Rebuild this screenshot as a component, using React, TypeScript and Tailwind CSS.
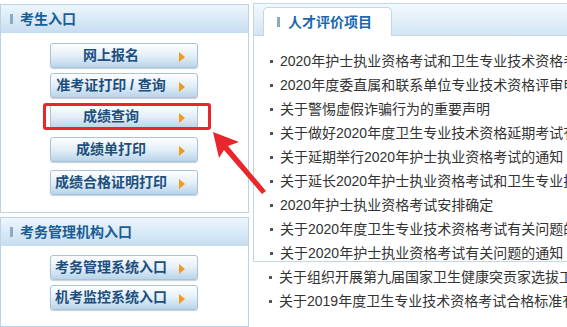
import React from "react";

const font = "font-['Liberation_Sans','Noto_Sans_CJK_SC',sans-serif]";

function Arrow() {
  return (
    <svg width="6" height="10" viewBox="0 0 6 10" className="absolute right-[12px] top-[8px]">
      <polygon points="0,0 6,5 0,10" fill="#f29a1c" />
    </svg>
  );
}

function EntryButton({ label, className = "" }: { label: string; className?: string }) {
  return (
    <div
      className={`relative ml-[49px] flex h-[25px] w-[148px] items-center justify-center rounded-[3px] border border-[#a9c3d8] bg-gradient-to-b from-[#fdfeff] via-[#e4eff8] to-[#b9d4e9] pr-[26px] text-[14px] font-bold text-[#1d4f7e] shadow-[0_1px_1px_rgba(90,120,150,0.35)] ${className}`}
    >
      <span className="whitespace-nowrap">{label}</span>
      <Arrow />
    </div>
  );
}

function PanelHeader({ title }: { title: string }) {
  return (
    <div className="flex h-[28px] items-center bg-gradient-to-b from-[#edf6fd] to-[#c6ddf0] pl-[9px]">
      <span className="mr-[7px] h-[10px] w-[3px] bg-[#8ea9bf]" />
      <span className="text-[14px] font-bold text-[#1a5c94]">{title}</span>
    </div>
  );
}

const news1 = [
  "2020年护士执业资格考试和卫生专业技术资格考试有关事项的通知",
  "2020年度委直属和联系单位专业技术资格评审申报工作的通知",
  "关于警惕虚假诈骗行为的重要声明",
  "关于做好2020年度卫生专业技术资格延期考试有关工作的通知",
  "关于延期举行2020年护士执业资格考试的通知",
  "关于延长2020年护士执业资格考试和卫生专业技术资格考试报名时间",
  "2020年护士执业资格考试安排确定",
  "关于2020年度卫生专业技术资格考试有关问题的通知",
  "关于2020年护士执业资格考试有关问题的通知",
];

const news2 = [
  "关于组织开展第九届国家卫生健康突贡家选拔工作的通知",
  "关于2019年度卫生专业技术资格考试合格标准有关问题",
];

function NewsItem({ text }: { text: string }) {
  return (
    <li className="flex h-[24px] items-center whitespace-nowrap pl-[16px] text-[14px] text-[#333]">
      <span className="mr-[7px] h-[3px] w-[3px] shrink-0 bg-[#555]" />
      {text}
    </li>
  );
}

export default function App() {
  return (
    <div className={`relative flex h-[327px] w-[567px] overflow-hidden bg-white ${font}`}>
      <div className="flex w-[249px] shrink-0 flex-col pt-[4px]">
        <div className="h-[209px] border border-[#bdd3e4]">
          <PanelHeader title="考生入口" />
          <div className="flex flex-col pt-[10px]">
            <EntryButton label="网上报名" />
            <EntryButton label="准考证打印 / 查询" className="mt-[5px] pr-[12px]" />
            <EntryButton label="成绩查询" className="mt-[6px]" />
            <EntryButton label="成绩单打印" className="mt-[8px]" />
            <EntryButton label="成绩合格证明打印" className="mt-[8px] pr-[12px]" />
          </div>
        </div>
        <div className="mt-[4px] h-[110px] border border-[#bdd3e4]">
          <PanelHeader title="考务管理机构入口" />
          <div className="flex flex-col pt-[9px]">
            <EntryButton label="考务管理系统入口" className="pr-[12px]" />
            <EntryButton label="机考监控系统入口" className="mt-[5px] pr-[12px]" />
          </div>
        </div>
      </div>

      <div className="ml-[4px] flex min-w-0 flex-1 flex-col pt-[3px]">
        <div className="h-[259px] border-b border-l border-t border-[#c3d7e7]">
          <div className="flex h-[32px] items-end border-b border-[#c3d7e7] bg-gradient-to-b from-[#f2f8fd] to-[#d3e6f5] pl-[9px]">
            <div className="relative top-px flex h-[29px] w-[129px] items-center rounded-t-[5px] border border-b-0 border-[#c3d7e7] bg-white pl-[13px]">
              <span className="mr-[8px] h-[10px] w-[3px] bg-[#8ea9bf]" />
              <span className="text-[14px] font-bold text-[#1b68ae]">人才评价项目</span>
            </div>
          </div>
          <ul className="pt-[13px]">
            {news1.map((t) => (
              <NewsItem key={t} text={t} />
            ))}
          </ul>
        </div>
        <ul className="mt-[3px]">
          {news2.map((t) => (
            <NewsItem key={t} text={t} />
          ))}
        </ul>
      </div>

      {/* annotation: red box and arrow */}
      <div className="absolute left-[43px] top-[103px] h-[27px] w-[168px] rounded-[3px] border-[3px] border-[#e8262b]" />
      <svg className="absolute left-0 top-0" width="567" height="327" viewBox="0 0 567 327">
        <polygon points="213,132 239,142 228,146 266,191 262,194 224,150 219,158" fill="#e8262b" />
      </svg>
    </div>
  );
}
